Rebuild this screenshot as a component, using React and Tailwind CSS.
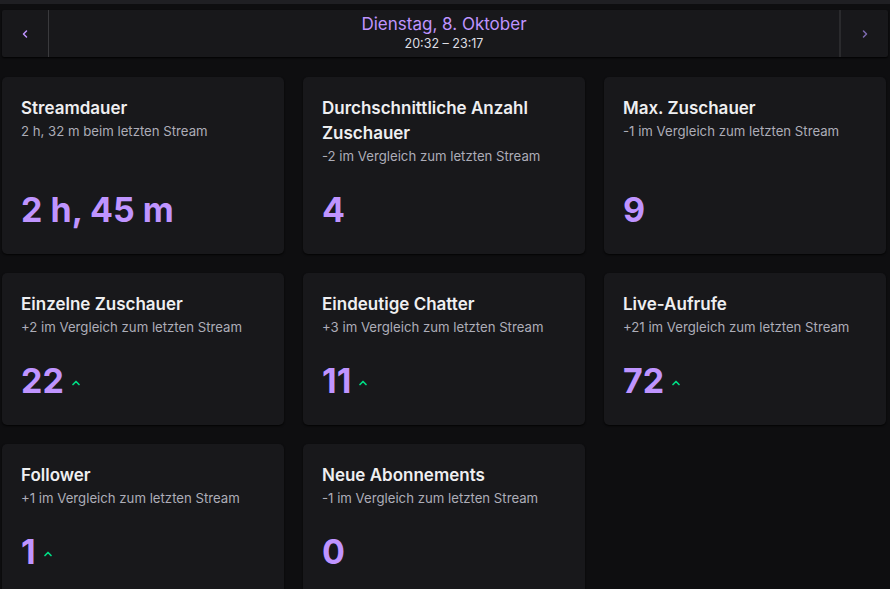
import { ChevronLeft, ChevronRight, ChevronUp } from 'lucide-react';

const stats = [
  { title: 'Streamdauer', sub: '2 h, 32 m beim letzten Stream', value: '2 h, 45 m' },
  { title: 'Durchschnittliche Anzahl Zuschauer', sub: '-2 im Vergleich zum letzten Stream', value: '4' },
  { title: 'Max. Zuschauer', sub: '-1 im Vergleich zum letzten Stream', value: '9' },
  { title: 'Einzelne Zuschauer', sub: '+2 im Vergleich zum letzten Stream', value: '22', up: true },
  { title: 'Eindeutige Chatter', sub: '+3 im Vergleich zum letzten Stream', value: '11', up: true },
  { title: 'Live-Aufrufe', sub: '+21 im Vergleich zum letzten Stream', value: '72', up: true },
  { title: 'Follower', sub: '+1 im Vergleich zum letzten Stream', value: '1', up: true },
  { title: 'Neue Abonnements', sub: '-1 im Vergleich zum letzten Stream', value: '0' },
];

export default function App() {
  return (
    <div className="min-h-screen bg-[#0e0e10] font-['Inter',sans-serif] overflow-hidden h-[589px]">
      {/* obere Leiste */}
      <div className="h-[4px] bg-[#1f1f23]" />

      {/* Datumsnavigation */}
      <div className="mx-[2px] mt-[6px] h-[47px] bg-[#18181b] flex rounded-[2px] shadow-[0_1px_2px_rgba(0,0,0,0.9)]">
        <button className="w-[47px] flex items-center justify-center border-r border-[#3a3a3d] text-[#bf94ff]">
          <ChevronLeft size={12} strokeWidth={3} />
        </button>
        <div className="flex-1 flex flex-col items-center pt-[3px]">
          <p className="text-[17px] leading-[22px] text-[#bf94ff]">Dienstag, 8. Oktober</p>
          <p className="text-[12.5px] leading-[18px] text-[#dedee3]">20:32 – 23:17</p>
        </div>
        <button className="w-[49px] flex items-center justify-center border-l-2 border-[#2a2a2d] text-[#7d6ab0]">
          <ChevronRight size={12} strokeWidth={3} />
        </button>
      </div>

      {/* Kennzahlen */}
      <div className="ml-[2px] w-[884px] mt-[20px] grid grid-cols-3 gap-[19px]">
        {stats.map((s) => (
          <div key={s.title} className="bg-[#18181b] rounded-[5px] px-[19px] pt-[19px] pb-[20px] flex flex-col shadow-[0_1px_2px_rgba(0,0,0,0.8)]">
            <h3 className="text-[17px] leading-[25px] font-semibold text-[#efeff1]">{s.title}</h3>
            <p className="text-[13.2px] leading-[20px] text-[#adadb8]">{s.sub}</p>
            <div className="mt-auto pt-[20px] flex items-center gap-[6px] h-[68px]">
              <span className="text-[34px] leading-[48px] font-bold text-[#bf94ff]">{s.value}</span>
              {s.up && <ChevronUp size={12} strokeWidth={3.5} className="text-[#00db84] mt-[3px]" />}
            </div>
          </div>
        ))}
      </div>
    </div>
  );
}
